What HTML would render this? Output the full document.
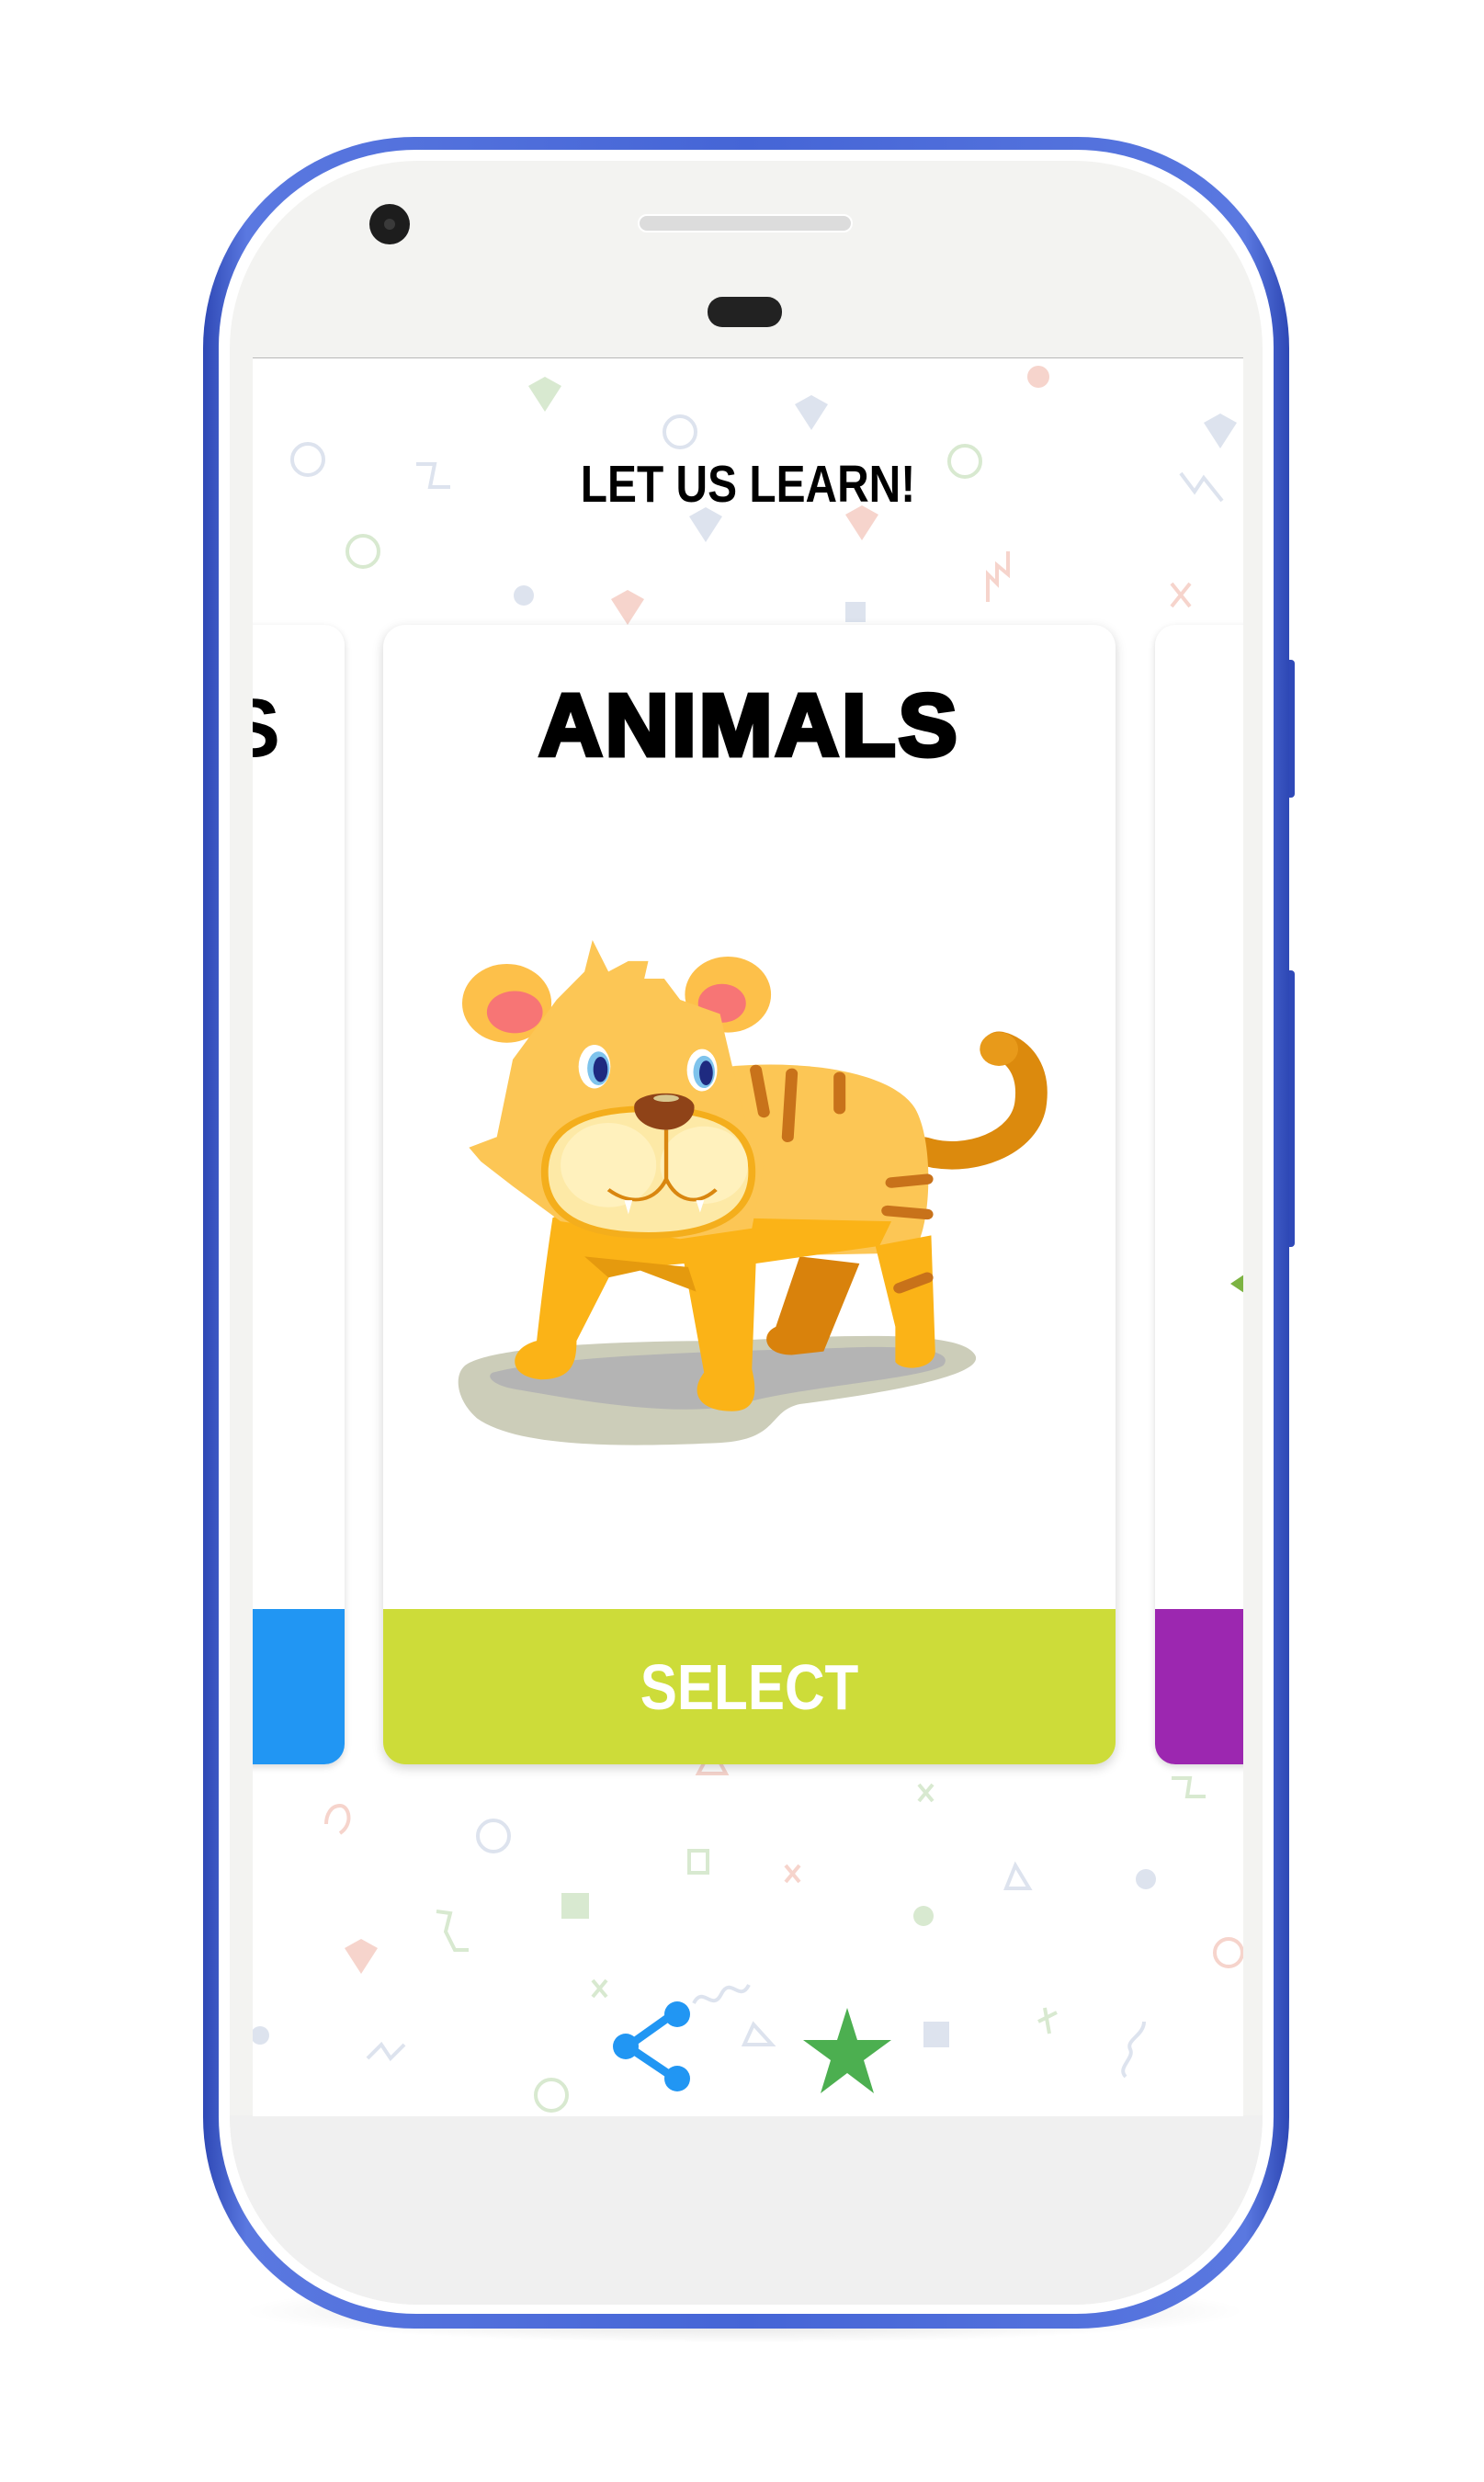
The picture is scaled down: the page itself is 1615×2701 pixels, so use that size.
<!DOCTYPE html>
<html><head><meta charset="utf-8"><style>
html,body{margin:0;padding:0;background:#fff;}
body{width:1615px;height:2701px;position:relative;overflow:hidden;font-family:"Liberation Sans",sans-serif;}
.abs{position:absolute;}
</style></head><body>
<div class="abs" style="left:260px;top:2480px;width:1100px;height:70px;border-radius:50%;background:radial-gradient(ellipse at center,rgba(0,0,0,0.18),rgba(0,0,0,0) 70%);"></div>
<div class="abs" style="left:1395px;top:718px;width:14px;height:150px;background:#2f49b8;border-radius:4px;"></div>
<div class="abs" style="left:1395px;top:1056px;width:14px;height:301px;background:#2f49b8;border-radius:4px;"></div>
<div class="abs" style="left:221px;top:149px;width:1182px;height:2385px;border-radius:230px;background:linear-gradient(90deg,#2e48b5,#5a78e0 4%,#4565d6 50%,#5a78e0 96%,#2e48b5);"></div>
<div class="abs" style="left:238px;top:163px;width:1148px;height:2355px;border-radius:215px;background:#fff;"></div>
<div class="abs" style="left:250px;top:175px;width:1124px;height:2333px;border-radius:205px;background:#f3f3f1;"></div>
<div class="abs" style="left:250px;top:2302px;width:1124px;height:206px;border-radius:0 0 205px 205px;background:#f0f0f0;"></div>
<div class="abs" style="left:402px;top:222px;width:44px;height:44px;border-radius:50%;background:#1d1d1d;"></div>
<div class="abs" style="left:418px;top:238px;width:12px;height:12px;border-radius:50%;background:#3a3a3a;"></div>
<div class="abs" style="left:694px;top:233px;width:234px;height:20px;border-radius:10px;background:#dcdcdc;border:2px solid #fff;box-sizing:border-box;"></div>
<div class="abs" style="left:770px;top:323px;width:81px;height:33px;border-radius:16px;background:#222;"></div>
<div class="abs" style="left:275px;top:389px;width:1078px;height:1913px;background:#fff;border-top:1px solid #b8b8b8;overflow:hidden;">
<svg width="1078" height="1913" style="position:absolute;left:0;top:0" fill="none" stroke-width="4">
<circle cx="60" cy="110" r="17" stroke="#dde3ee"/>
<circle cx="120" cy="210" r="17" stroke="#d8e9d0"/>
<circle cx="465" cy="80" r="17" stroke="#dde3ee"/>
<circle cx="775" cy="112" r="17" stroke="#d8e9d0"/>
<circle cx="855" cy="20" r="12" fill="#f6d4cc" stroke="none"/>
<circle cx="295" cy="258" r="11" fill="#dde3ee" stroke="none"/>
<path d="M300 30l18-10 18 10-18 28z" fill="#d8e9d0" stroke="none"/>
<path d="M590 50l18-10 18 10-18 28z" fill="#dde3ee" stroke="none"/>
<path d="M1035 70l18-10 18 10-18 28z" fill="#dde3ee" stroke="none"/>
<path d="M475 172l18-10 18 10-18 28z" fill="#dde3ee" stroke="none"/>
<path d="M645 170l18-10 18 10-18 28z" fill="#f6d4cc" stroke="none"/>
<path d="M390 262l18-10 18 10-18 28z" fill="#f6d4cc" stroke="none"/>
<rect x="645" y="265" width="22" height="22" fill="#dde3ee" stroke="none"/>
<path d="M178 115h20l-5 25h22" stroke="#dde3ee"/>
<path d="M1010 125l15 20 10-15 20 25" stroke="#dde3ee"/>
<path d="M800 265v-30l10 10v-20l12 10v-25" stroke="#f6d4cc"/>
<path d="M1000 245l20 25M1020 245l-20 25" stroke="#f6d4cc"/>
<path d="M80 1595c0-10 5-20 15-20 10 0 15 20 0 30" stroke="#f6d4cc"/>
<circle cx="262" cy="1608" r="17" stroke="#dde3ee"/>
<path d="M485 1540l15 -28 15 28z" stroke="#f6d4cc"/>
<rect x="475" y="1624" width="20" height="24" stroke="#d8e9d0"/>
<path d="M580 1640l15 18M595 1640l-15 18" stroke="#f6d4cc"/>
<path d="M725 1552l15 18M740 1552l-15 18" stroke="#d8e9d0"/>
<circle cx="730" cy="1695" r="11" fill="#d8e9d0" stroke="none"/>
<path d="M820 1665l10-25 15 25z" stroke="#dde3ee"/>
<circle cx="972" cy="1655" r="11" fill="#dde3ee" stroke="none"/>
<circle cx="1062" cy="1735" r="15" stroke="#f6d4cc"/>
<path d="M1000 1545h20l-3 20h20" stroke="#d8e9d0"/>
<path d="M200 1690l15 2 -5 20 10 20 h15" stroke="#d8e9d0"/>
<rect x="336" y="1670" width="30" height="28" fill="#d8e9d0" stroke="none"/>
<path d="M100 1730l18-10 18 10-18 28z" fill="#f6d4cc" stroke="none"/>
<path d="M480 1790c10-20 20 10 30-10s20 10 30-10" stroke="#dde3ee"/>
<path d="M370 1765l15 18M385 1765l-15 18" stroke="#d8e9d0"/>
<circle cx="8" cy="1825" r="10" fill="#dde3ee" stroke="none"/>
<path d="M125 1850l15-15 10 15 15-15" stroke="#dde3ee"/>
<circle cx="325" cy="1890" r="17" stroke="#d8e9d0"/>
<path d="M535 1835l10-22 20 22z" stroke="#dde3ee"/>
<rect x="730" y="1810" width="28" height="28" fill="#dde3ee" stroke="none"/>
<path d="M855 1810l20-10M862 1795l5 28" stroke="#d8e9d0"/>
<path d="M950 1870c-10-10 10-20 5-30s15-15 15-30" stroke="#dde3ee"/>
</svg>
<div class="abs" style="left:0;top:104px;width:1078px;text-align:center;font-size:57px;font-weight:bold;color:#000;transform:scaleX(0.84);">LET US LEARN!</div>
<div class="abs" style="left:-30px;top:290px;width:130px;height:1240px;border-radius:22px;background:#fff;box-shadow:0 3px 8px rgba(0,0,0,0.15);overflow:hidden;">
<div class="abs" style="left:0;top:1071px;width:130px;height:170px;background:#2196f3;"></div>
<div class="abs" style="left:0;top:62px;font-size:90px;font-weight:bold;color:#000;">S</div>
</div>
<div class="abs" style="left:982px;top:290px;width:140px;height:1240px;border-radius:22px;background:#fff;box-shadow:0 3px 8px rgba(0,0,0,0.15);overflow:hidden;">
<div class="abs" style="left:0;top:1071px;width:140px;height:170px;background:#9c27b0;"></div>
<div class="abs" style="left:82px;top:705px;width:0;height:0;border-top:12px solid transparent;border-bottom:12px solid transparent;border-right:18px solid #7cb342;"></div>
</div>
<div class="abs" style="left:142px;top:290px;width:797px;height:1240px;border-radius:24px;background:#fff;box-shadow:0 4px 12px rgba(0,0,0,0.18);overflow:hidden;">
<div class="abs" style="left:0;top:55px;width:797px;text-align:center;font-size:96px;font-weight:bold;color:#000;letter-spacing:3px;-webkit-text-stroke:5px #000;font-family:'Liberation Sans',sans-serif;">ANIMALS</div>
<div class="abs" style="left:0;top:1071px;width:797px;height:170px;background:#cddc39;"></div>
<div class="abs" style="left:0;top:1116px;width:797px;text-align:center;font-size:70px;font-weight:bold;color:#fff;transform:scaleX(0.86);">SELECT</div>
</div>
<svg class="abs" style="left:380px;top:1780px" width="110" height="110" viewBox="0 0 110 110">
<path d="M80 20L28 57L80 92" stroke="#2196f3" stroke-width="9" fill="none"/>
<circle cx="82" cy="22" r="14" fill="#2196f3"/><circle cx="26" cy="57" r="14" fill="#2196f3"/><circle cx="82" cy="92" r="14" fill="#2196f3"/>
</svg>
<svg class="abs" style="left:597px;top:1792px" width="100" height="100" viewBox="0 0 100 100">
<path d="M50 3L61 38L98 38L68 60L79 96L50 74L21 96L32 60L2 38L39 38Z" fill="#4caf50"/>
</svg>
</div>
<svg class="abs" style="left:480px;top:1000px" width="680" height="600" viewBox="0 0 1568 1568" preserveAspectRatio="none">
<path d="M60 1270C120 1220 400 1200 700 1200C950 1190 1300 1160 1340 1240C1370 1300 1100 1350 900 1380C820 1400 850 1480 700 1490C500 1500 200 1510 90 1420C40 1370 30 1300 60 1270Z" fill="#cccdb9"/>
<path d="M130 1290C300 1240 700 1230 1000 1220C1200 1210 1290 1230 1260 1270C1200 1310 900 1330 750 1380C600 1420 350 1370 200 1340C130 1330 110 1300 130 1290Z" fill="#b4b4b4"/>
<path d="M1210 660C1320 700 1470 640 1480 520C1490 420 1440 370 1400 360" stroke="#dc8a0d" stroke-width="80" fill="none" stroke-linecap="round"/>
<circle cx="1400" cy="370" r="48" fill="#e89a1a"/>
<path d="M900 960L840 1160C800 1180 810 1240 880 1240L960 1230L1050 980Z" fill="#d9820c"/>
<path d="M720 420C900 400 1130 430 1190 540C1240 640 1230 900 1180 950L720 960Z" fill="#fcc655"/>
<path d="M1090 930L1140 1160L1140 1260C1160 1290 1240 1280 1240 1230L1230 900Z" fill="#fbb317"/>
<path d="M280 850C260 1000 250 1100 240 1200C170 1220 160 1300 250 1310C330 1310 340 1260 340 1200L430 1000L610 980L660 1290C620 1350 650 1400 730 1400C800 1400 790 1330 780 1280L790 980L1100 930L1130 860L300 840Z" fill="#fbb317"/>
<path d="M360 960L620 990L640 1060L500 1000L420 1020Z" fill="#e59a0e"/>
<path d="M790 430L810 550M880 440L870 620M1000 450L1000 540M1130 750L1220 740M1120 830L1220 840M1150 1050L1220 1020" stroke="#c8721a" stroke-width="30" stroke-linecap="round"/>
<circle cx="165" cy="240" r="112" fill="#fdc04a"/><ellipse cx="185" cy="265" rx="70" ry="60" fill="#f77575"/>
<circle cx="720" cy="215" r="108" fill="#fdc04a"/><ellipse cx="705" cy="240" rx="60" ry="55" fill="#f77575"/>
<path d="M380 60L420 150L470 120L520 120L510 170L560 170L600 230L700 270L760 560L810 700L780 880L600 910L300 860L180 760L100 690L70 650L140 620L180 400L290 230L360 150Z" fill="#fcc655"/>
<path d="M260 720C260 600 350 540 520 540C700 540 780 600 780 720C780 860 650 900 520 900C350 900 260 840 260 720Z" fill="#fde9a6" stroke="#f4ae1c" stroke-width="18"/>
<ellipse cx="420" cy="700" rx="120" ry="120" fill="#fff1bd"/><ellipse cx="660" cy="700" rx="110" ry="110" fill="#fff1bd"/>
<path d="M420 770C480 820 540 800 565 740C590 800 640 820 690 770" stroke="#d9860f" stroke-width="10" fill="none"/>
<path d="M565 600V740" stroke="#d9860f" stroke-width="10"/>
<path d="M460 800L470 840L480 800ZM640 800L650 835L660 800Z" fill="#fff"/>
<ellipse cx="385" cy="420" rx="40" ry="62" fill="#fff"/><ellipse cx="395" cy="425" rx="28" ry="48" fill="#7ec3ec"/><ellipse cx="400" cy="428" rx="18" ry="36" fill="#1e2a80"/>
<ellipse cx="655" cy="430" rx="38" ry="60" fill="#fff"/><ellipse cx="660" cy="435" rx="27" ry="46" fill="#7ec3ec"/><ellipse cx="665" cy="438" rx="17" ry="35" fill="#1e2a80"/>
<path d="M485 530C490 490 620 480 635 530C640 570 600 600 565 600C520 600 480 570 485 530Z" fill="#8f4318"/>
<ellipse cx="565" cy="510" rx="32" ry="10" fill="#d8c78f"/>
</svg>
</body></html>
